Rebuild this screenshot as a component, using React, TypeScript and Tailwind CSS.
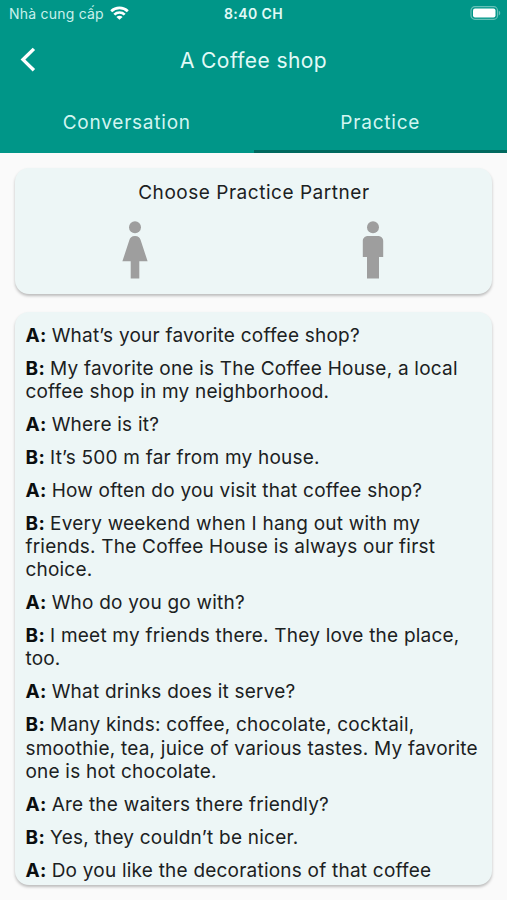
import React from "react";

type Line = { who: "A" | "B"; rows: string[] };

const dialogue: Line[] = [
  { who: "A", rows: ["What’s your favorite coffee shop?"] },
  { who: "B", rows: ["My favorite one is The Coffee House, a local", "coffee shop in my neighborhood."] },
  { who: "A", rows: ["Where is it?"] },
  { who: "B", rows: ["It’s 500 m far from my house."] },
  { who: "A", rows: ["How often do you visit that coffee shop?"] },
  { who: "B", rows: ["Every weekend when I hang out with my", "friends. The Coffee House is always our first", "choice."] },
  { who: "A", rows: ["Who do you go with?"] },
  { who: "B", rows: ["I meet my friends there. They love the place,", "too."] },
  { who: "A", rows: ["What drinks does it serve?"] },
  { who: "B", rows: ["Many kinds: coffee, chocolate, cocktail,", "smoothie, tea, juice of various tastes. My favorite", "one is hot chocolate."] },
  { who: "A", rows: ["Are the waiters there friendly?"] },
  { who: "B", rows: ["Yes, they couldn’t be nicer."] },
  { who: "A", rows: ["Do you like the decorations of that coffee"] },
];

function StatusBar() {
  return (
    <div className="grid h-[28px] grid-cols-3 items-center text-[14px] leading-[28px]">
      <div className="flex items-center gap-[6px] pl-[9px] text-[#c9f1ec]">
        <span className="whitespace-nowrap tracking-[0.22px]">Nhà cung cấp</span>
        <svg className="mb-[3px] h-[14px] w-[19px] shrink-0" viewBox="0 0 19 14" fill="none" stroke="#fff" strokeWidth="2.7">
          <path d="M1.2 5.2C5.8 .7 13.2 .7 17.8 5.2" />
          <path d="M4.3 8.6C7.2 5.8 11.8 5.8 14.7 8.6" />
          <path d="M6.4 10.9C8.1 9.3 10.9 9.3 12.6 10.9L9.5 13.8Z" fill="#fff" stroke="none" />
        </svg>
      </div>
      <div className="text-center font-semibold tracking-[0.4px] text-[#e2faf7]">8:40 CH</div>
      <div className="flex justify-end pr-[6px]">
        <svg className="mb-[2px] h-[14px] w-[31px]" viewBox="0 0 31 14">
          <rect x="1" y=".7" width="26.5" height="12.6" rx="3.8" fill="none" stroke="#66c1b8" strokeWidth="1.2" />
          <rect x="3" y="2.6" width="22.5" height="8.9" rx="2" fill="#fff" />
          <path d="M28.8 4.8C30.7 5.5 30.7 8.7 28.8 9.4Z" fill="#66c1b8" />
        </svg>
      </div>
    </div>
  );
}

function Header() {
  return (
    <header className="h-[153px] bg-[#009688]">
      <StatusBar />
      <div className="grid h-[64px] grid-cols-[80px_1fr_80px] items-center">
        <svg className="ml-[20px] h-[26px] w-[16px]" viewBox="0 0 16 26" fill="none" stroke="#fff" strokeWidth="3.4">
          <path d="M13.9 1.9L3 12.6L13.9 23.3" />
        </svg>
        <h1 className="pt-[2px] text-center text-[21px] tracking-[0.42px] text-[#e2faf7]">A Coffee shop</h1>
      </div>
      <nav className="grid h-[61px] grid-cols-2 text-center text-[19px] leading-[55px] tracking-[0.78px] text-[#d2f5f1]">
        <div className="pt-[3px]">Conversation</div>
        <div className="border-b-[3px] border-[#00695f] pt-[3px]">Practice</div>
      </nav>
    </header>
  );
}

function PartnerPicker() {
  return (
    <section className="h-[126px] rounded-[14px] bg-[#edf6f6] pt-[11px] shadow-[0_2px_3px_rgba(0,0,0,0.25)]">
      <h2 className="text-center text-[19px] leading-[28px] tracking-[0.53px] text-[#1b2122]">Choose Practice Partner</h2>
      <div className="mt-[14px] grid grid-cols-2 justify-items-center">
        <svg className="h-[58px] w-[26px]" viewBox="0 0 26 58" fill="#9e9e9e">
          <circle cx="13" cy="6.3" r="6" />
          <path d="M13 15C16.4 15 18 17 18.7 19.2L25.6 40.3H17.3V57.6H8.7V40.3H.4L7.3 19.2C8 17 9.6 15 13 15Z" />
        </svg>
        <svg className="h-[58px] w-[22px]" viewBox="0 0 22 58" fill="#9e9e9e">
          <circle cx="11" cy="6.3" r="6" />
          <path d="M6.2 14.9H15.8C19.2 14.9 21.2 17 21.2 20V36H17V57.6H5V36H.8V20C.8 17 2.8 14.9 6.2 14.9Z" />
        </svg>
      </div>
    </section>
  );
}

function Transcript() {
  return (
    <section className="h-[573px] overflow-hidden rounded-[14px] bg-[#edf6f6] pl-[10px] pt-[12px] shadow-[0_2px_3px_rgba(0,0,0,0.25)]">
      <div className="flex flex-col gap-[9.75px] whitespace-nowrap text-[19px] leading-[23.2px] tracking-[0.22px] text-[#1b2122]">
        {dialogue.map((line, i) => (
          <p key={i}>
            {line.rows.map((row, j) => (
              <span key={j} className="block">
                {j === 0 && <b className="font-bold tracking-[0.4px] text-[#0a0e0f]">{line.who}: </b>}
                {row}
              </span>
            ))}
          </p>
        ))}
      </div>
    </section>
  );
}

export default function App() {
  return (
    <div className="h-[900px] w-[507px] overflow-hidden bg-[#fafafa] font-[Inter,sans-serif]">
      <Header />
      <main className="flex flex-col gap-[18px] pl-[15.4px] pr-[14.6px] pt-[15px]">
        <PartnerPicker />
        <Transcript />
      </main>
    </div>
  );
}
